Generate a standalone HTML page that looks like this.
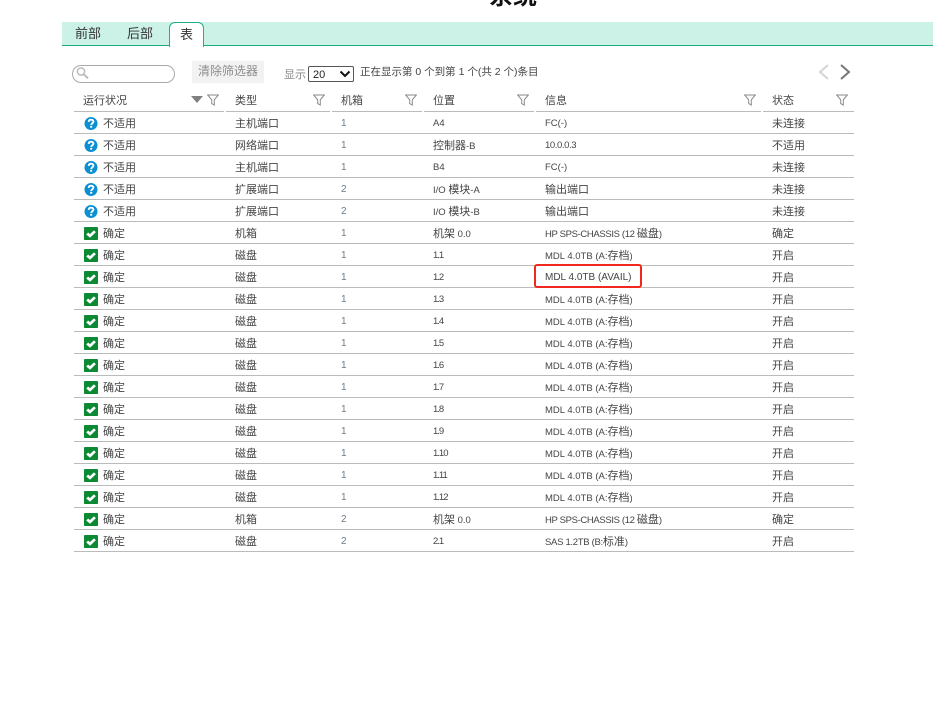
<!DOCTYPE html>
<html lang="zh">
<head>
<meta charset="utf-8">
<style>
html,body{margin:0;padding:0;background:#fff;width:951px;height:708px;overflow:hidden}
body{position:relative;font-family:"Liberation Sans","Noto Sans CJK SC",sans-serif;color:#444;font-size:11px}
.a{position:absolute;white-space:nowrap}
.title{left:489px;top:-15px;font-size:24px;line-height:24px;font-weight:bold;color:#111}
.tabbar{left:62px;top:22px;width:871px;height:23px;background:#ccf1e6;border-bottom:1px solid #1fa982}
.tab{font-size:13px;line-height:16px;color:#333;top:26px}
.tabon{left:169px;top:22px;width:33px;height:24px;background:#fff;border:1px solid #1fb08a;border-bottom:none;border-radius:6px 6px 0 0;text-align:center;font-size:13px;line-height:24px;color:#333;box-sizing:content-box}
.search{left:72px;top:65px;width:101px;height:16px;border:1px solid #aaa;border-radius:9px}
.clear{left:192px;top:61px;width:72px;height:22px;background:#f2f2f2;color:#8c8c8c;font-size:12px;line-height:21px;text-align:center}
.sel{left:308px;top:66px;height:14px;border:1px solid #555;border-radius:2px;font-size:11px;line-height:16px;color:#222;padding-left:4px;box-sizing:content-box;width:40px}
.row,.head{position:absolute;left:74px;width:780px;height:21px;border-bottom:1px solid #bbb}
.row span,.head span{position:absolute;white-space:nowrap;top:0;line-height:24px}
.row span{font-size:11px}
.head span{font-size:11px;line-height:22px}
.c1{left:29px}.c2{left:161px}.c3{left:267px}.c4{left:359px}.c5{left:471px}.c6{left:698px}
.row .n{font-size:10px;color:#6b7c8c}
.row .l{font-size:9.5px}
.row .p{font-size:9.5px;letter-spacing:-1px}
.row .h{letter-spacing:-.35px}
.row .s{letter-spacing:-.3px}
.row .m{font-size:9.5px}
i{font-style:normal;font-size:11px;letter-spacing:0}
svg{position:absolute;display:block}
.row svg{left:10px;top:5px;width:14px;height:13px}
.f{top:94px}
.gap{position:absolute;top:110px;width:2px;height:2px;background:#fff}
</style>
</head>
<body>
<svg width="0" height="0" style="position:absolute">
<defs>
<symbol id="q" viewBox="0 0 14 14"><circle cx="7" cy="7" r="7" fill="#0b8fd3"/><path d="M4.5 5.3C4.6 3.7 5.7 2.9 7.1 2.9 8.6 2.9 9.6 3.8 9.6 5 9.6 6.6 7.2 6.8 7.2 8.6" fill="none" stroke="#fff" stroke-width="2"/><rect x="6.1" y="9.5" width="2.2" height="2" fill="#fff"/></symbol>
<symbol id="k" viewBox="0 0 14 14" preserveAspectRatio="none"><rect width="14" height="14" rx="1" fill="#0c8a33"/><path d="M3.2 7L6 9.6 10.9 4.6" fill="none" stroke="#fff" stroke-width="2.8"/></symbol>
<symbol id="fu" viewBox="0 0 12 12"><path d="M.7 1H11.3L7.3 5.8V11L4.7 9.6V5.8Z" fill="none" stroke="#8a8a8a" stroke-width="1"/></symbol>
</defs>
</svg>

<div class="a title">系统</div>
<div class="a tabbar"></div>
<div class="a tab" style="left:75px">前部</div>
<div class="a tab" style="left:127px">后部</div>
<div class="a tabon">表</div>

<div class="a search"></div>
<svg style="left:75px;top:66px" width="15" height="14" viewBox="0 0 15 14"><circle cx="6" cy="5.5" r="3.6" fill="none" stroke="#bbb" stroke-width="1.5"/><path d="M8.8 8.3L13 12.3" stroke="#bbb" stroke-width="2"/></svg>
<div class="a clear">清除筛选器</div>
<div class="a" style="left:284px;top:67px;font-size:11px;line-height:16px;color:#888">显示</div>
<div class="a sel">20</div>
<svg style="left:339px;top:70px" width="12" height="8" viewBox="0 0 12 8"><path d="M1.5 1.5L6 6 10.5 1.5" fill="none" stroke="#111" stroke-width="2"/></svg>
<div class="a" style="left:360px;top:64px;font-size:10.5px;line-height:16px;color:#444">正在显示第 0 个到第 1 个(共 2 个)条目</div>
<svg style="left:817px;top:63px" width="13" height="18" viewBox="0 0 13 18"><path d="M11 2L3 9 11 16" fill="none" stroke="#d4d4d4" stroke-width="2"/></svg>
<svg style="left:839px;top:63px" width="13" height="18" viewBox="0 0 13 18"><path d="M2 2L10 9 2 16" fill="none" stroke="#777" stroke-width="2"/></svg>

<div class="head" style="top:90px">
<span style="left:9px">运行状况</span><span class="c2">类型</span><span class="c3">机箱</span><span class="c4">位置</span><span class="c5">信息</span><span class="c6">状态</span>
</div>
<svg style="left:191px;top:96px" width="12" height="7" viewBox="0 0 12 7"><path d="M0 0H12L6 7Z" fill="#808080"/></svg>
<svg class="f" style="left:207px" width="12" height="12"><use href="#fu"/></svg>
<svg class="f" style="left:313px" width="12" height="12"><use href="#fu"/></svg>
<svg class="f" style="left:405px" width="12" height="12"><use href="#fu"/></svg>
<svg class="f" style="left:517px" width="12" height="12"><use href="#fu"/></svg>
<svg class="f" style="left:744px" width="12" height="12"><use href="#fu"/></svg>
<svg class="f" style="left:836px" width="12" height="12"><use href="#fu"/></svg>
<div class="gap" style="left:224px"></div>
<div class="gap" style="left:330px"></div>
<div class="gap" style="left:422px"></div>
<div class="gap" style="left:534px"></div>
<div class="gap" style="left:761px"></div>

<div class="row" style="top:112px"><svg><use href="#q"/></svg><span class="c1">不适用</span><span class="c2">主机端口</span><span class="c3 n">1</span><span class="c4 l">A4</span><span class="c5 l">FC(-)</span><span class="c6">未连接</span></div>
<div class="row" style="top:134px"><svg><use href="#q"/></svg><span class="c1">不适用</span><span class="c2">网络端口</span><span class="c3 n">1</span><span class="c4 m"><i>控制器</i>-B</span><span class="c5 l" style="letter-spacing:-.4px">10.0.0.3</span><span class="c6">不适用</span></div>
<div class="row" style="top:156px"><svg><use href="#q"/></svg><span class="c1">不适用</span><span class="c2">主机端口</span><span class="c3 n">1</span><span class="c4 l">B4</span><span class="c5 l">FC(-)</span><span class="c6">未连接</span></div>
<div class="row" style="top:178px"><svg><use href="#q"/></svg><span class="c1">不适用</span><span class="c2">扩展端口</span><span class="c3 n">2</span><span class="c4 m">I/O <i>模块</i>-A</span><span class="c5">输出端口</span><span class="c6">未连接</span></div>
<div class="row" style="top:200px"><svg><use href="#q"/></svg><span class="c1">不适用</span><span class="c2">扩展端口</span><span class="c3 n">2</span><span class="c4 m">I/O <i>模块</i>-B</span><span class="c5">输出端口</span><span class="c6">未连接</span></div>
<div class="row" style="top:222px"><svg><use href="#k"/></svg><span class="c1">确定</span><span class="c2">机箱</span><span class="c3 n">1</span><span class="c4 m"><i>机架</i> 0.0</span><span class="c5 l h">HP SPS-CHASSIS (12 <i>磁盘</i>)</span><span class="c6">确定</span></div>
<div class="row" style="top:244px"><svg><use href="#k"/></svg><span class="c1">确定</span><span class="c2">磁盘</span><span class="c3 n">1</span><span class="c4 p">1.1</span><span class="c5 l">MDL 4.0TB (A:<i>存档</i>)</span><span class="c6">开启</span></div>
<div class="row" style="top:266px"><svg><use href="#k"/></svg><span class="c1">确定</span><span class="c2">磁盘</span><span class="c3 n">1</span><span class="c4 p">1.2</span><span class="c5 l" style="font-size:10px">MDL 4.0TB (AVAIL)</span><span class="c6">开启</span></div>
<div class="row" style="top:288px"><svg><use href="#k"/></svg><span class="c1">确定</span><span class="c2">磁盘</span><span class="c3 n">1</span><span class="c4 p">1.3</span><span class="c5 l">MDL 4.0TB (A:<i>存档</i>)</span><span class="c6">开启</span></div>
<div class="row" style="top:310px"><svg><use href="#k"/></svg><span class="c1">确定</span><span class="c2">磁盘</span><span class="c3 n">1</span><span class="c4 p">1.4</span><span class="c5 l">MDL 4.0TB (A:<i>存档</i>)</span><span class="c6">开启</span></div>
<div class="row" style="top:332px"><svg><use href="#k"/></svg><span class="c1">确定</span><span class="c2">磁盘</span><span class="c3 n">1</span><span class="c4 p">1.5</span><span class="c5 l">MDL 4.0TB (A:<i>存档</i>)</span><span class="c6">开启</span></div>
<div class="row" style="top:354px"><svg><use href="#k"/></svg><span class="c1">确定</span><span class="c2">磁盘</span><span class="c3 n">1</span><span class="c4 p">1.6</span><span class="c5 l">MDL 4.0TB (A:<i>存档</i>)</span><span class="c6">开启</span></div>
<div class="row" style="top:376px"><svg><use href="#k"/></svg><span class="c1">确定</span><span class="c2">磁盘</span><span class="c3 n">1</span><span class="c4 p">1.7</span><span class="c5 l">MDL 4.0TB (A:<i>存档</i>)</span><span class="c6">开启</span></div>
<div class="row" style="top:398px"><svg><use href="#k"/></svg><span class="c1">确定</span><span class="c2">磁盘</span><span class="c3 n">1</span><span class="c4 p">1.8</span><span class="c5 l">MDL 4.0TB (A:<i>存档</i>)</span><span class="c6">开启</span></div>
<div class="row" style="top:420px"><svg><use href="#k"/></svg><span class="c1">确定</span><span class="c2">磁盘</span><span class="c3 n">1</span><span class="c4 p">1.9</span><span class="c5 l">MDL 4.0TB (A:<i>存档</i>)</span><span class="c6">开启</span></div>
<div class="row" style="top:442px"><svg><use href="#k"/></svg><span class="c1">确定</span><span class="c2">磁盘</span><span class="c3 n">1</span><span class="c4 p">1.10</span><span class="c5 l">MDL 4.0TB (A:<i>存档</i>)</span><span class="c6">开启</span></div>
<div class="row" style="top:464px"><svg><use href="#k"/></svg><span class="c1">确定</span><span class="c2">磁盘</span><span class="c3 n">1</span><span class="c4 p">1.11</span><span class="c5 l">MDL 4.0TB (A:<i>存档</i>)</span><span class="c6">开启</span></div>
<div class="row" style="top:486px"><svg><use href="#k"/></svg><span class="c1">确定</span><span class="c2">磁盘</span><span class="c3 n">1</span><span class="c4 p">1.12</span><span class="c5 l">MDL 4.0TB (A:<i>存档</i>)</span><span class="c6">开启</span></div>
<div class="row" style="top:508px"><svg><use href="#k"/></svg><span class="c1">确定</span><span class="c2">机箱</span><span class="c3 n">2</span><span class="c4 m"><i>机架</i> 0.0</span><span class="c5 l h">HP SPS-CHASSIS (12 <i>磁盘</i>)</span><span class="c6">确定</span></div>
<div class="row" style="top:530px"><svg><use href="#k"/></svg><span class="c1">确定</span><span class="c2">磁盘</span><span class="c3 n">2</span><span class="c4 p">2.1</span><span class="c5 l s">SAS 1.2TB (B:<i>标准</i>)</span><span class="c6">开启</span></div>

<div class="a" style="left:534px;top:264px;width:104px;height:20px;border:2px solid #f0281e;border-radius:3px"></div>
</body>
</html>
